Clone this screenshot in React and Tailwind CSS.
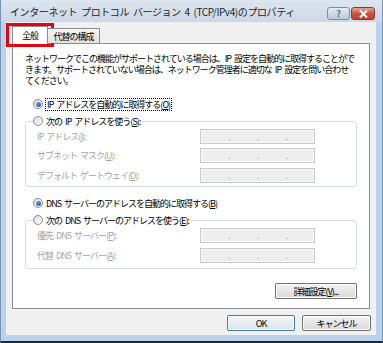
import React from 'react';

function Radio({ checked }) {
  return (
    <span className="inline-flex h-[10px] w-[10px] shrink-0 items-center justify-center rounded-full border border-[#8f8f8f] bg-linear-to-br from-[#d9d9d9] to-white">
      {checked && <span className="h-[5px] w-[5px] rounded-full bg-linear-to-br from-[#6aaef0] to-[#1c4f9a]" />}
    </span>
  );
}

function U({ children }) {
  return <span className="underline underline-offset-1">{children}</span>;
}

function IpBox() {
  return (
    <div className="flex h-[15px] w-[115px] items-end border border-[#c9c9c9] bg-[#eeeeee] pb-[2px] text-[8px] leading-none text-[#8c8c8c] shadow-[inset_0_0_0_1px_#f8f8f8]">
      <span className="flex-1" />
      <span>.</span>
      <span className="flex-1" />
      <span>.</span>
      <span className="flex-1" />
      <span>.</span>
      <span className="flex-1" />
    </div>
  );
}

function FieldRow({ label, className }) {
  return (
    <div className={'flex items-center pl-[11px] ' + className}>
      <span className="w-[163px] text-[#a6a6a6]">{label}</span>
      <IpBox />
    </div>
  );
}

function Button({ children, focused, className }) {
  const tone = focused
    ? 'border-[#3c7fb1] from-[#f3f7fa] to-[#dbe4ec]'
    : 'border-[#707070] from-[#f3f3f3] to-[#d8d8d8]';
  return (
    <div className={'flex h-[16px] items-center justify-center rounded-[2px] border bg-linear-to-b shadow-[inset_0_0_0_1px_#fbfbfb] ' + tone + ' ' + className}>
      {children}
    </div>
  );
}

export default function App() {
  return (
    <div className="relative flex h-[343px] w-[383px] flex-col border-x border-b-2 border-x-[#7893b3] border-b-[#1c2834] bg-[#b9d1ea] font-['Noto_Sans_CJK_JP','Noto_Sans',sans-serif] text-[9px] leading-[11px] tracking-[-1px] [word-spacing:2px] text-black">
      {/* title bar */}
      <div className="flex h-[22px] shrink-0 items-start bg-linear-to-b from-[#dde5ee] to-[#cbd8e6] pl-[9px] pr-[7px]">
        <span className="mt-[5px] text-[10px] leading-[13px] tracking-[-0.4px] text-[#1d1d1d]">
          インターネット プロトコル バージョン 4 (TCP/IPv4)のプロパティ
        </span>
        <div className="ml-auto mt-[7px] flex gap-[1px]">
          <div className="flex h-[13px] w-[23px] items-center justify-center rounded-[3px] border border-[#7d8ea4] bg-linear-to-b from-[#e4ebf3] to-[#b9c9db] text-[9px] font-bold tracking-normal text-[#5d6c80]">
            ?
          </div>
          <div className="flex h-[13px] w-[24px] items-center justify-center rounded-[3px] border border-[#8a3a33] bg-linear-to-b from-[#e0a89c] via-[#c7533f] to-[#c2402f]">
            <svg width="9" height="8" viewBox="0 0 9 8">
              <path d="M1 0.5 L8 7.5 M8 0.5 L1 7.5" stroke="white" strokeWidth="2" />
            </svg>
          </div>
        </div>
      </div>

      {/* client */}
      <div className="ml-[5px] mr-[6px] flex h-[313px] flex-col bg-[#f0f0f0] px-[6px] pt-[4px]">
        <div className="relative z-10 flex h-[17px] items-end">
          <div className="-mb-px flex h-[18px] w-[36px] items-center justify-center border border-b-0 border-[#898c95] bg-white">
            全般
          </div>
          <div className="flex h-[15px] w-[52px] items-center justify-center border border-b-0 border-l-0 border-[#898c95] bg-linear-to-b from-[#f6f6f6] to-[#e0e0e0]">
            代替の構成
          </div>
        </div>

        <div className="h-[266px] border border-[#898c95] bg-white">
          <p className="whitespace-nowrap pl-[12px] pt-[9px]">
            ネットワークでこの機能がサポートされている場合は、IP 設定を自動的に取得することがで
            <br />
            きます。サポートされていない場合は、ネットワーク管理者に適切な IP 設定を問い合わせ
            <br />
            てください。
          </p>

          <div className="mt-[11px] flex h-[14px] items-center gap-[2px] pl-[20px]">
            <Radio checked />
            <span className="border border-dotted border-black px-[1px]">
              IP アドレスを自動的に取得する(<U>O</U>)
            </span>
          </div>

          <fieldset className="mx-[12px] mt-[3px] rounded-[3px] border border-[#d3dde4] pb-[3px]">
            <legend className="ml-[7px] pr-[2px]">
              <div className="flex h-[14px] items-center gap-[3px]">
                <Radio />
                <span>次の IP アドレスを使う(<U>S</U>):</span>
              </div>
            </legend>
            <FieldRow label={<>IP アドレス(<U>I</U>):</>} className="mt-[1px]" />
            <FieldRow label={<>サブネット マスク(<U>U</U>):</>} className="mt-[4px]" />
            <FieldRow label={<>デフォルト ゲートウェイ(<U>D</U>):</>} className="mt-[5px]" />
          </fieldset>

          <div className="mt-[9px] flex h-[14px] items-center gap-[3px] pl-[20px]">
            <Radio checked />
            <span>DNS サーバーのアドレスを自動的に取得する(<U>B</U>)</span>
          </div>

          <fieldset className="mx-[12px] mt-[3px] rounded-[3px] border border-[#d3dde4] pb-[5px]">
            <legend className="ml-[7px] pr-[2px]">
              <div className="flex h-[14px] items-center gap-[3px]">
                <Radio />
                <span>次の DNS サーバーのアドレスを使う(<U>E</U>):</span>
              </div>
            </legend>
            <FieldRow label={<>優先 DNS サーバー(<U>P</U>):</>} className="mt-[1px]" />
            <FieldRow label={<>代替 DNS サーバー(<U>A</U>):</>} className="mt-[5px]" />
          </fieldset>

          <div className="mt-[14px] flex justify-end pr-[12px]">
            <Button className="w-[82px]">
              詳細設定(<U>V</U>)...
            </Button>
          </div>
        </div>

        <div className="-mr-px mt-[6px] flex justify-end gap-[7px]">
          <Button focused className="w-[68px]">OK</Button>
          <Button className="w-[69px]">キャンセル</Button>
        </div>
      </div>

      {/* highlight */}
      <div className="absolute left-[5px] top-[23px] h-[24px] w-[48px] border-[3px] border-[#e60012]" />
    </div>
  );
}
